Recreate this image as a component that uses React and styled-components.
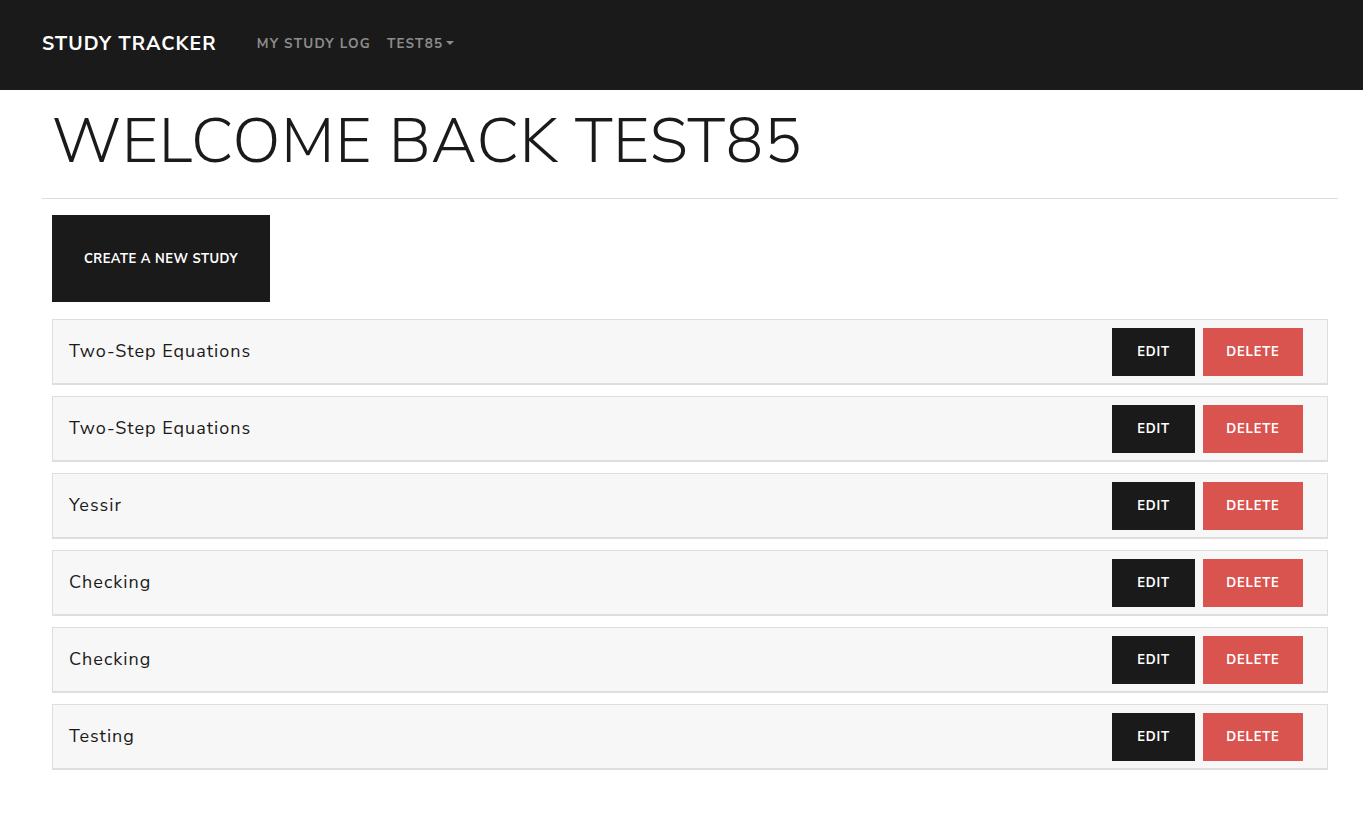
import React from "react";
import styled, { createGlobalStyle } from "styled-components";

const GlobalStyle = createGlobalStyle`
  body {
    margin: 0;
    background: #fff;
    font-family: "Nunito Sans", Lato, "Open Sans", sans-serif;
    color: #1a1a1a;
  }
`;

const Nav = styled.nav`
  display: flex;
  align-items: center;
  height: 90px;
  padding-left: 42px;
  padding-bottom: 4px;
  box-sizing: border-box;
  background: #1a1a1a;
`;

const Brand = styled.a`
  color: #fff;
  font-size: 19.5px;
  font-weight: 700;
  letter-spacing: 1.1px;
  text-decoration: none;
  margin-right: 40px;
`;

const NavLinks = styled.div`
  display: flex;
  align-items: center;
  gap: 16px;
`;

const NavLink = styled.a`
  display: inline-flex;
  align-items: center;
  color: #8c8c8c;
  font-size: 13.5px;
  font-weight: 700;
  letter-spacing: 1.2px;
  text-decoration: none;
`;

const Caret = styled.span`
  display: inline-block;
  margin-left: 3px;
  width: 0;
  height: 0;
  border-left: 4px solid transparent;
  border-right: 4px solid transparent;
  border-top: 4px solid #8c8c8c;
`;

const Main = styled.main`
  padding: 0 25px 0 42px;
`;

const Title = styled.h1`
  margin: 0;
  padding: 17px 10px 22px;
  font-size: 63px;
  font-weight: 300;
  line-height: 1.1;
  letter-spacing: 0.7px;
  border-bottom: 1px solid #dcdcdc;
`;

const Content = styled.div`
  padding: 16px 10px 0;
`;

const Button = styled.button`
  border: none;
  cursor: pointer;
  color: #fff;
  font-family: inherit;
  font-size: 13px;
  font-weight: 700;
  letter-spacing: ${(p) => (p.$wide ? "0.5px" : "0.8px")};
  text-transform: uppercase;
  background: ${(p) => (p.$danger ? "#d9534f" : "#1a1a1a")};
  width: ${(p) => p.$width}px;
  height: ${(p) => p.$height}px;
`;

const List = styled.ul`
  list-style: none;
  margin: 17px 0 0;
  padding: 0;
  display: flex;
  flex-direction: column;
  gap: 11px;
`;

const Row = styled.li`
  display: flex;
  align-items: center;
  justify-content: space-between;
  height: 63px;
  padding: 0 24px 0 16px;
  background: #f7f7f7;
  border: 1px solid #dedede;
  border-bottom-width: 2px;
`;

const Name = styled.span`
  font-size: 18px;
  letter-spacing: 1px;
  color: #1a1a1a;
  margin-bottom: 2px;
`;

const Actions = styled.div`
  display: flex;
  gap: 8px;
`;

const studies = [
  "Two-Step Equations",
  "Two-Step Equations",
  "Yessir",
  "Checking",
  "Checking",
  "Testing",
];

export default function App() {
  return (
    <>
      <GlobalStyle />
      <Nav>
        <Brand href="#">STUDY TRACKER</Brand>
        <NavLinks>
          <NavLink href="#">MY STUDY LOG</NavLink>
          <NavLink href="#">
            TEST85
            <Caret />
          </NavLink>
        </NavLinks>
      </Nav>
      <Main>
        <Title>WELCOME BACK TEST85</Title>
        <Content>
          <Button $wide $width={218} $height={87}>
            Create a new study
          </Button>
          <List>
            {studies.map((s, i) => (
              <Row key={i}>
                <Name>{s}</Name>
                <Actions>
                  <Button $width={83} $height={48}>
                    Edit
                  </Button>
                  <Button $danger $width={100} $height={48}>
                    Delete
                  </Button>
                </Actions>
              </Row>
            ))}
          </List>
        </Content>
      </Main>
    </>
  );
}
